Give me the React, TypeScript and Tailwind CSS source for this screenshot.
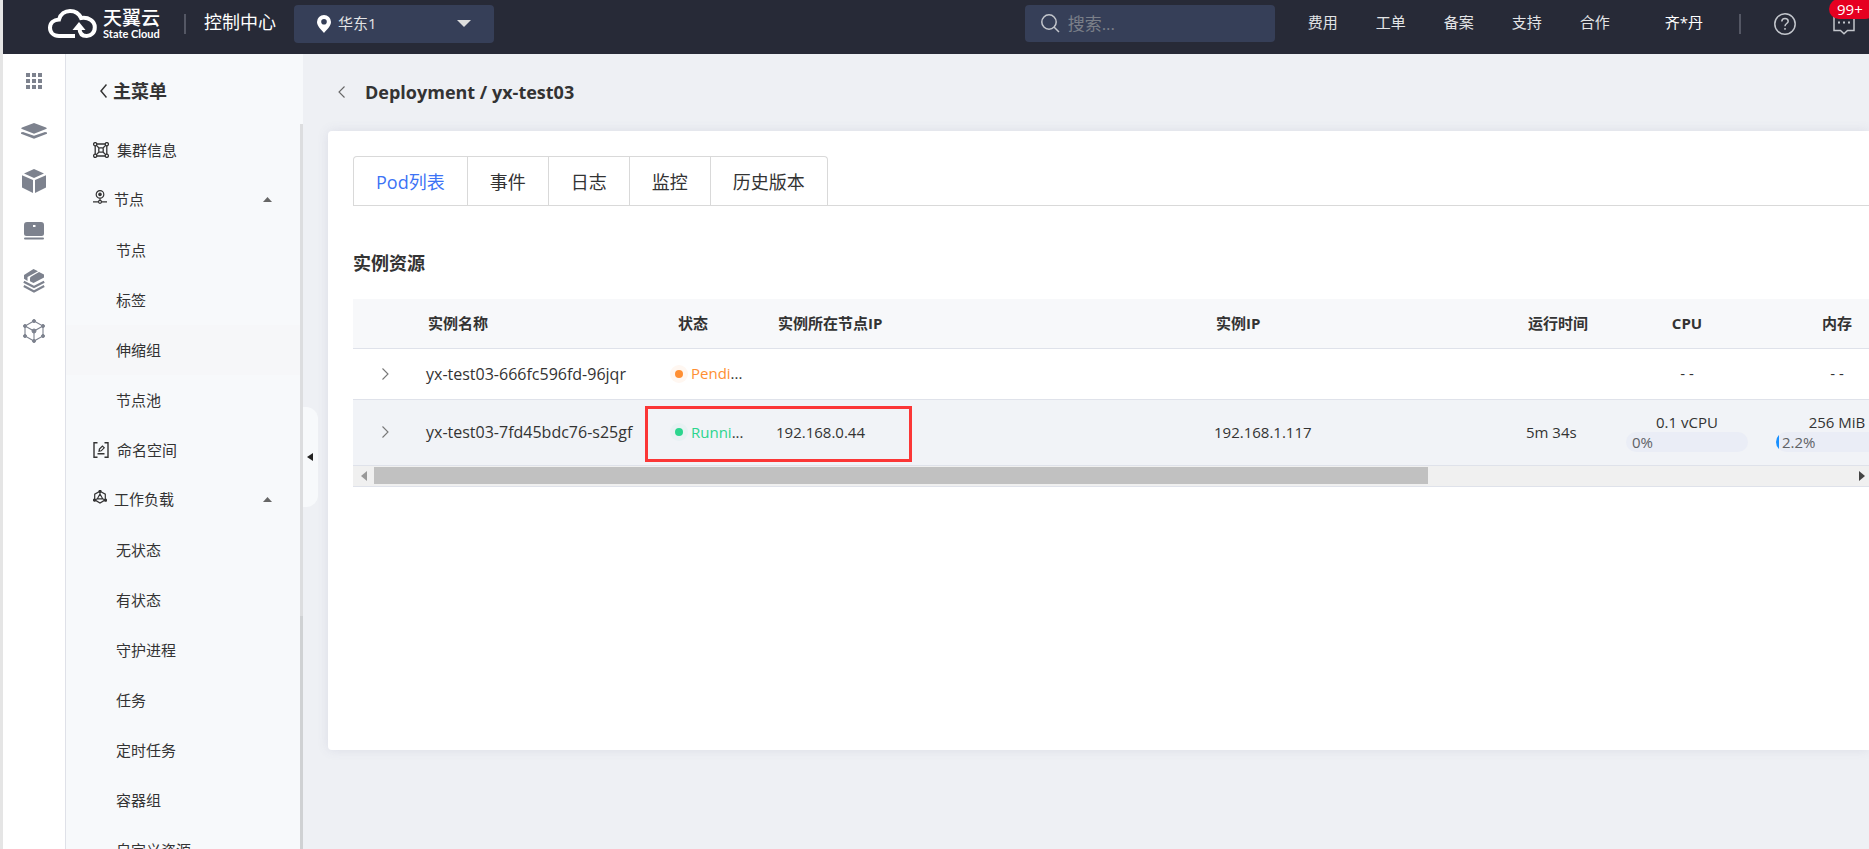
import { ReactNode } from 'react';

type MenuItem = {
  label: string;
  icon?: ReactNode;
  group?: boolean;
  active?: boolean;
};

type Pod = {
  name: string;
  status: string;
  running: boolean;
  nodeIp: string;
  podIp: string;
  uptime: string;
  cpu?: { total: string; percent: number };
  memory?: { total: string; percent: number };
};

const ClusterIcon = () => (
  <svg className="size-4" viewBox="0 0 16 16" fill="none" stroke="#333" strokeWidth="1.3">
    <circle cx="2.2" cy="2.2" r="1.6" />
    <circle cx="13.8" cy="2.2" r="1.6" />
    <circle cx="2.2" cy="13.8" r="1.6" />
    <circle cx="13.8" cy="13.8" r="1.6" />
    <rect x="5.8" y="5.8" width="4.4" height="4.4" rx="1" />
    <path d="M3.8 2h8.4M3.8 14h8.4M2.2 3.8v8.4M13.8 3.8v8.4M3.4 3.4l2.6 2.6M12.6 3.4L10 6M3.4 12.6L6 10M12.6 12.6L10 10" />
  </svg>
);

const NodeIcon = () => (
  <svg className="h-[18px] w-3.5" viewBox="0 0 14 18" fill="none" stroke="#333" strokeWidth="1.2">
    <circle cx="7" cy="4.4" r="3.8" />
    <circle cx="7" cy="4.4" r="1.2" fill="#333" />
    <circle cx="7" cy="11.8" r="1.5" />
    <path d="M7 8.2v2M0 11.8h5.5M8.5 11.8H14" />
  </svg>
);

const NamespaceIcon = () => (
  <svg className="size-4" viewBox="0 0 16 16" fill="none" stroke="#333" strokeWidth="1.4">
    <path d="M4.5 .8H1v14.4h3.5M11.5 .8H15v14.4h-3.5M4.5 11.7h7" />
    <path d="M6 9.3l.4-2.2 3-3 1.8 1.7-3 3L6 9.3z" strokeWidth="1.2" />
  </svg>
);

const WorkloadIcon = () => (
  <svg className="h-[18px] w-3.5" viewBox="0 0 14 18" fill="none" stroke="#333" strokeWidth="1.2">
    <path d="M7 1.2l5.3 3v5.6L7 13 1.7 9.8V4.2L7 1.2z" />
    <path d="M7 4l2.7 4.8H4.3L7 4zM7 1v3M1 10.5l3.3-1.7M13 10.5L9.7 8.8" />
    <circle cx="7" cy="1.3" r="1" fill="#333" />
    <circle cx="1.5" cy="10.2" r="1" fill="#333" />
    <circle cx="12.5" cy="10.2" r="1" fill="#333" />
  </svg>
);

const menu: MenuItem[] = [
  { label: '集群信息', icon: <ClusterIcon /> },
  { label: '节点', icon: <NodeIcon />, group: true },
  { label: '节点' },
  { label: '标签' },
  { label: '伸缩组', active: true },
  { label: '节点池' },
  { label: '命名空间', icon: <NamespaceIcon /> },
  { label: '工作负载', icon: <WorkloadIcon />, group: true },
  { label: '无状态' },
  { label: '有状态' },
  { label: '守护进程' },
  { label: '任务' },
  { label: '定时任务' },
  { label: '容器组' },
  { label: '自定义资源' },
];

const pods: Pod[] = [
  {
    name: 'yx-test03-666fc596fd-96jqr',
    status: 'Pendi',
    running: false,
    nodeIp: '',
    podIp: '',
    uptime: '',
  },
  {
    name: 'yx-test03-7fd45bdc76-s25gf',
    status: 'Runni',
    running: true,
    nodeIp: '192.168.0.44',
    podIp: '192.168.1.117',
    uptime: '5m 34s',
    cpu: { total: '0.1 vCPU', percent: 0 },
    memory: { total: '256 MiB', percent: 2.2 },
  },
];

const railIcons: { name: string; icon: ReactNode }[] = [
  {
    name: '全部产品',
    icon: (
      <svg className="h-4 w-4" viewBox="0 0 16 16" fill="#7d828e">
        <path d="M0 0h4v4H0zM6 0h4v4H6zM12 0h4v4h-4zM0 6h4v4H0zM6 6h4v4H6zM12 6h4v4h-4zM0 12h4v4H0zM6 12h4v4H6zM12 12h4v4h-4z" />
      </svg>
    ),
  },
  {
    name: '集群',
    icon: (
      <svg className="h-4 w-[26px]" viewBox="0 0 26 16" fill="#7d828e">
        <path d="M13 0l12 4.4q1.5.8 0 1.6L13 10.8 1 6q-1.5-.8 0-1.6z" />
        <path d="M0 9.5l2-.6 11 3.9 11-3.9 2 .6v1.2L13 15.8 0 10.7z" />
      </svg>
    ),
  },
  {
    name: '容器',
    icon: (
      <svg className="size-6" viewBox="0 0 24 24" fill="#7d828e">
        <path d="M12 0l10 4.5L12 9 2 4.5zM0 6.3l11 4.7v13L0 18.5zM24 6.3L13 11v13l11-5.5z" />
      </svg>
    ),
  },
  {
    name: '镜像',
    icon: (
      <svg className="h-[18px] w-5" viewBox="0 0 20 18" fill="#7d828e">
        <path fillRule="evenodd" d="M3 0h14a3 3 0 0 1 3 3v8.5a2.5 2.5 0 0 1-2.5 2.5h-15A2.5 2.5 0 0 1 0 11.5V3a3 3 0 0 1 3-3zM9 3v2h2.5V3z" />
        <rect y="15.5" width="20" height="2" rx="1" />
      </svg>
    ),
  },
  {
    name: '模板',
    icon: (
      <svg className="h-6 w-[22px]" viewBox="0 0 22 24">
        <path fill="#7d828e" d="M10.5 0l4.5 2.2L4.5 8v4L1 9.8V6z" />
        <path fill="#7d828e" d="M16 3l5 2.6v3L10.5 14 7 12.2V9.5q0-1.5 1.2-2z" />
        <path fill="none" stroke="#7d828e" strokeWidth="2.2" d="M.8 12.8L11 18l10.2-5.2M.8 17L11 22.4 21.2 17" />
      </svg>
    ),
  },
  {
    name: '网络',
    icon: (
      <svg className="h-6 w-[22px]" viewBox="0 0 22 24" fill="#7d828e" stroke="#7d828e">
        <path fill="none" strokeWidth="1.1" d="M11 2l9 5v10l-9 5-9-5V7zM2 7l9 5 9-5M11 12v10" />
        <circle cx="11" cy="2" r="1.5" />
        <circle cx="20" cy="7" r="1.5" />
        <circle cx="20" cy="17" r="1.5" />
        <circle cx="11" cy="22" r="1.5" />
        <circle cx="2" cy="17" r="1.5" />
        <circle cx="2" cy="7" r="1.5" />
        <circle cx="11" cy="12" r="2" />
      </svg>
    ),
  },
];

const navLinks = ['费用', '工单', '备案', '支持', '合作'];
const tabs = ['Pod列表', '事件', '日志', '监控', '历史版本'];

function TopBar() {
  return (
    <header className="flex h-[54px] shrink-0 items-center bg-[#272a37] pb-[7px] pl-[45px] pr-3.5 text-[15px] text-[#e3e4e6]">
      <a href="#" className="flex items-center gap-1.5 text-white">
        <svg className="h-[30px] w-[49px]" viewBox="0 0 49 30" fill="none">
          <path
            d="M27 27H11C5.5 27 2 23.5 2 18.8S5.5 10.8 11 10.5C12.5 5 17 2 22 2c5 0 9 2.500 11 7 7.5-1.2 13.8 3 13.8 9.2 0 5.5-3.800 8.800-8 8.800-4.800 0-7.300-3-7.300-8"
            stroke="#fff"
            strokeWidth="4"
          />
          <path d="M31 13l6.5 8h-13z" fill="#fff" />
        </svg>
        <span className="block">
          <span className="block text-[19px] font-medium leading-[21px]">天翼云</span>
          <span className="block font-['Lato'] text-[11px] font-bold leading-[10px]">State Cloud</span>
        </span>
      </a>
      <span className="ml-6 h-5 w-0.5 bg-[#545764]" />
      <a href="#" className="ml-[18px] pb-[3px] text-lg text-white">控制中心</a>
      <div className="relative ml-[18px] h-[38px] w-[200px] rounded bg-[#363f58]">
        <svg className="absolute left-[23px] top-2.5 h-[18px] w-3.5" viewBox="0 0 14 18" fill="#fff">
          <path fillRule="evenodd" d="M7 0a7 7 0 0 1 7 7c0 4-4.5 8-7 11-2.5-3-7-7-7-11a7 7 0 0 1 7-7zm0 4a2.8 2.8 0 1 0 0 5.6A2.8 2.8 0 0 0 7 4z" />
        </svg>
        <select aria-label="区域" className="h-full w-full appearance-none bg-transparent pl-11 text-[15px] text-[#e3e4e6]">
          <option>华东1</option>
        </select>
        <svg className="pointer-events-none absolute right-[23px] top-[15px] h-[7px] w-3.5" viewBox="0 0 14 7" fill="#dedede">
          <path d="M0 0h14L7 7z" />
        </svg>
      </div>
      <label className="ml-auto flex h-[37px] w-[250px] items-center gap-2 rounded-sm bg-[#363f58] pl-4">
        <svg className="size-[19px] shrink-0" viewBox="0 0 19 19" fill="none" stroke="#c3c6cc" strokeWidth="1.5">
          <circle cx="8" cy="8" r="7.2" />
          <path d="M13 13l5 5" />
        </svg>
        <input aria-label="搜索" placeholder="搜索..." className="w-full bg-transparent text-[17px] outline-none placeholder:text-[#7b7f89]" />
      </label>
      <nav className="ml-[33px] flex gap-[38px] pb-[3px]">
        {navLinks.map((link) => (
          <a key={link} href="#">{link}</a>
        ))}
      </nav>
      <a href="#" className="ml-[55px] pb-[3px] text-white">齐*丹</a>
      <span className="ml-9 h-5 w-0.5 bg-[#545764]" />
      <button aria-label="帮助" className="ml-[33px]">
        <svg className="size-[22px]" viewBox="0 0 22 22" fill="none" stroke="#c3c6cc" strokeWidth="1.5">
          <circle cx="11" cy="11" r="10.2" />
          <path d="M7.8 8.6c0-2 1.4-3.2 3.2-3.2s3.2 1.2 3.2 2.9c0 2.2-3.2 2.3-3.2 4.9M11 15v1.7" />
        </svg>
      </button>
      <button aria-label="消息" className="relative ml-[37px]">
        <svg className="size-[22px]" viewBox="0 0 22 22" fill="none" stroke="#c3c6cc" strokeWidth="1.5">
          <path d="M1 1h20v16.5h-6.5L11 20.8l-3.5-3.3H1z" />
          <path d="M5 9.5h2M10 9.5h2M15 9.5h2" strokeWidth="2" />
        </svg>
        <span className="absolute -left-1 -top-3.5 h-5 w-[46px] rounded-full bg-[#e60021] pl-2 text-left text-[15px] leading-5 text-white">99+</span>
      </button>
    </header>
  );
}

function Rail() {
  return (
    <nav className="flex w-[63px] shrink-0 flex-col border-r border-[#dfe1e8] bg-white pt-0.5">
      {railIcons.map((item) => (
        <a key={item.name} href="#" aria-label={item.name} className="flex h-[50px] items-center justify-center">
          {item.icon}
        </a>
      ))}
    </nav>
  );
}

function SideMenu() {
  return (
    <aside className="relative w-[237px] shrink-0 bg-[#f7f9fb] text-[15px] text-[#333]">
      <button className="flex h-[70px] items-center gap-1.5 pl-[34px] pt-1 text-lg font-bold">
        <svg className="h-3.5 w-[7px]" viewBox="0 0 7 14" fill="none" stroke="#333" strokeWidth="1.5">
          <path d="M6.5 .5L1 7l5.5 6.5" />
        </svg>
        主菜单
      </button>
      <div className="flex h-[calc(100vh-124px)] overflow-hidden">
        <ul className="flex-1 pt-px">
          {menu.map((item, i) => (
            <li key={i} className={item.active ? 'bg-[#f6f7f9]' : ''}>
              <a href="#" className={`flex h-[50px] items-center ${item.icon ? 'pl-[27px]' : 'pl-[50px]'} ${item.group ? 'gap-[7px] pb-0.5' : 'gap-2'}`}>
                {item.icon}
                {item.label}
                {item.group && (
                  <svg className="ml-auto mr-7 h-[5px] w-[9px]" viewBox="0 0 9 5" fill="#666">
                    <path d="M4.5 0L9 5H0z" />
                  </svg>
                )}
              </a>
            </li>
          ))}
        </ul>
        <div className="w-[3px] bg-[#dcdddf] pt-[492px]">
          <div className="h-full bg-[#cfd1d3]" />
        </div>
      </div>
      <button aria-label="收起菜单" className="absolute left-full top-[353px] flex h-[100px] w-[15px] items-center rounded-r-xl bg-[#f7f9fb] pl-1">
        <svg className="h-2 w-1.5" viewBox="0 0 6 8" fill="#222">
          <path d="M6 0v8L0 4z" />
        </svg>
      </button>
    </aside>
  );
}

function Usage({ usage }: { usage?: { total: string; percent: number } }) {
  if (!usage) {
    return <>- -</>;
  }
  return (
    <div className="leading-5">
      <div>{usage.total}</div>
      <div className="relative h-5 overflow-hidden rounded-full bg-[#eaedf6] pl-1.5 text-left text-[#606266]">
        <span className="absolute inset-y-0 left-0 bg-[#1890ff]" style={{ width: `${usage.percent}%` }} />
        {usage.percent}%
      </div>
    </div>
  );
}

function PodTable() {
  return (
    <div className="overflow-hidden">
      <table className="w-[1559px] table-fixed text-left text-[15px] text-[#333]">
        <colgroup>
          <col className="w-[59px]" />
          <col className="w-[250px]" />
          <col className="w-[100px]" />
          <col className="w-[438px]" />
          <col className="w-[312px]" />
          <col className="w-[100px]" />
          <col className="w-[150px]" />
          <col className="w-[150px]" />
        </colgroup>
        <thead>
          <tr className="h-[49px] border-b border-[#dfe2ea] bg-[#f7f8fa]">
            <th />
            <th className="pl-4">实例名称</th>
            <th className="pl-4">状态</th>
            <th className="pl-4">实例所在节点IP</th>
            <th className="pl-4">实例IP</th>
            <th className="pl-4">运行时间</th>
            <th className="text-center">CPU</th>
            <th className="text-center">内存</th>
          </tr>
        </thead>
        <tbody>
          {pods.map((pod) => (
            <tr key={pod.name} className={pod.running ? 'h-[66px] border-b border-[#dfe2ea] bg-[#f1f3f7]' : 'h-[51px] border-b border-[#dfe2ea]'}>
              <td>
                <button aria-label="展开" className="ml-7 block">
                  <svg className="h-3 w-2" viewBox="0 0 8 12" fill="none" stroke="#777" strokeWidth="1.1">
                    <path d="M1.5 .5L7 6l-5.5 5.5" />
                  </svg>
                </button>
              </td>
              <td className="whitespace-nowrap pl-3.5 text-base">{pod.name}</td>
              <td className="relative pl-2">
                <span className="flex items-center gap-[3px]">
                  <span className={`flex size-[18px] items-center justify-center rounded-full ${pod.running ? 'bg-[#e8f1f3]' : 'bg-[#fff7f1]'}`}>
                    <span className={`size-2 rounded-full ${pod.running ? 'bg-[#2bd58e]' : 'bg-[#ff8f33]'}`} />
                  </span>
                  <span>
                    <span className={pod.running ? 'text-[#2bd58e]' : 'text-[#ff8f33]'}>{pod.status}</span>...
                  </span>
                </span>
                {/* highlight round the status and node IP of the live pod */}
                {pod.running && (
                  <span className="pointer-events-none absolute -left-[17px] top-1.5 h-14 w-[267px] border-3 border-[#fb3636]" />
                )}
              </td>
              <td className="pl-3.5">{pod.nodeIp}</td>
              <td className="pl-3.5">{pod.podIp}</td>
              <td className="pl-3.5">{pod.uptime}</td>
              <td className="px-3.5 text-center"><Usage usage={pod.cpu} /></td>
              <td className="px-3.5 text-center"><Usage usage={pod.memory} /></td>
            </tr>
          ))}
        </tbody>
      </table>
    </div>
  );
}

function ScrollBar() {
  return (
    <div className="flex h-[21px] items-center justify-between border-b border-[#dfe2ea] bg-[#f0f0f0] pl-2 pr-1">
      <svg className="mr-[7px] h-2.5 w-[6px] shrink-0" viewBox="0 0 6 10" fill="#999">
        <path d="M6 0v10L0 5z" />
      </svg>
      <div className="flex-1">
        <div className="h-[17px] w-[71%] bg-[#c1c1c1]" />
      </div>
      <svg className="h-2.5 w-[6px] shrink-0" viewBox="0 0 6 10" fill="#444">
        <path d="M0 0v10l6-5z" />
      </svg>
    </div>
  );
}

export default function App() {
  return (
    <div className="flex h-screen flex-col overflow-hidden border-l-3 border-[#e5e5e5] bg-[#eef0f4] font-['Open_Sans','Noto_Sans_CJK_SC',sans-serif]">
      <TopBar />
      <div className="flex min-h-0 flex-1">
        <Rail />
        <SideMenu />
        <main className="min-w-0 flex-1 pl-[25px] text-[#333]">
          <div className="flex h-[77px] items-center gap-5 pb-0.5 pl-2.5">
            <button aria-label="返回">
              <svg className="h-3 w-[7px]" viewBox="0 0 7 12" fill="none" stroke="#666" strokeWidth="1.1">
                <path d="M6.5 .5L1 6l5.5 5.5" />
              </svg>
            </button>
            <h1 className="text-lg font-bold">Deployment / yx-test03</h1>
          </div>
          <section className="min-h-[619px] rounded-l bg-white pl-[25px] pt-[25px] shadow-[0_0_12px_rgba(90,90,140,0.12)]">
            <div className="flex border-b border-[#d9d9d9] text-lg">
              <div className="flex divide-x divide-[#d9d9d9] rounded-t border border-b-0 border-[#d9d9d9]">
                {tabs.map((tab, i) => (
                  <button key={tab} className={`h-12 px-[22px] pt-0.5 ${i === 0 ? 'text-[#3d73f5]' : ''}`}>{tab}</button>
                ))}
              </div>
            </div>
            <h2 className="pb-6 pt-[45px] text-lg font-bold leading-6">实例资源</h2>
            <PodTable />
            <ScrollBar />
          </section>
        </main>
      </div>
    </div>
  );
}
